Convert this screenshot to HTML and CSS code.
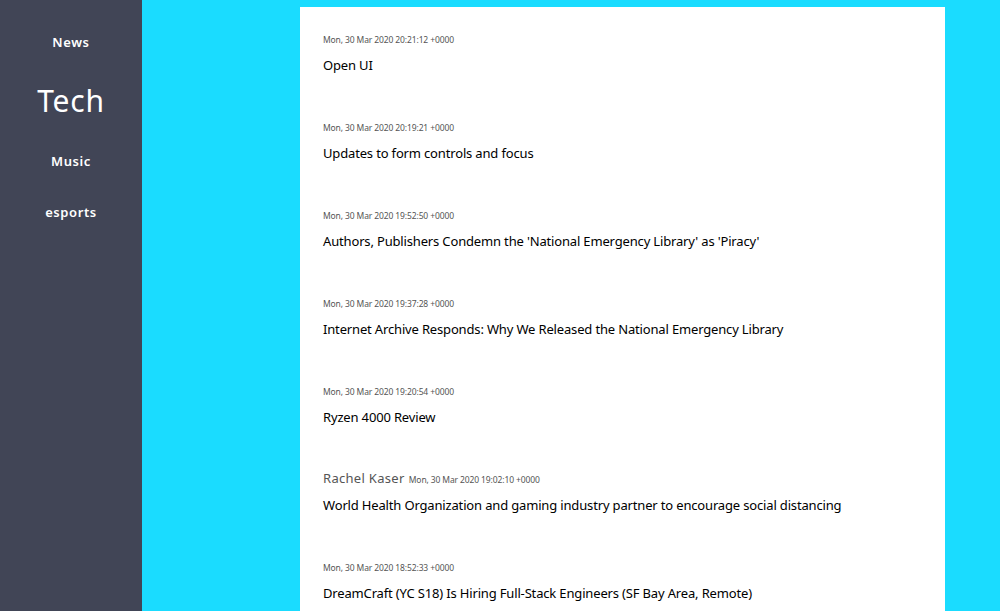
FILE: index.html
```html
<!DOCTYPE html>
<html>
<head>
<meta charset="utf-8">
<link rel="stylesheet" href="styles.css">
</head>
<body>
<div class="layout">
  <nav class="sidebar">
    <a class="nav-item nav-news">News</a>
    <a class="nav-item nav-active">Tech</a>
    <a class="nav-item nav-music">Music</a>
    <a class="nav-item nav-esports">esports</a>
  </nav>
  <main class="main">
    <section class="panel">
      <article class="item">
        <div class="meta"><span class="date">Mon, 30 Mar 2020 20:21:12 +0000</span></div>
        <div class="title">Open UI</div>
      </article>
      <article class="item">
        <div class="meta"><span class="date">Mon, 30 Mar 2020 20:19:21 +0000</span></div>
        <div class="title">Updates to form controls and focus</div>
      </article>
      <article class="item">
        <div class="meta"><span class="date">Mon, 30 Mar 2020 19:52:50 +0000</span></div>
        <div class="title">Authors, Publishers Condemn the 'National Emergency Library' as 'Piracy'</div>
      </article>
      <article class="item">
        <div class="meta"><span class="date">Mon, 30 Mar 2020 19:37:28 +0000</span></div>
        <div class="title">Internet Archive Responds: Why We Released the National Emergency Library</div>
      </article>
      <article class="item">
        <div class="meta"><span class="date">Mon, 30 Mar 2020 19:20:54 +0000</span></div>
        <div class="title">Ryzen 4000 Review</div>
      </article>
      <article class="item">
        <div class="meta"><span class="author">Rachel Kaser</span> <span class="date">Mon, 30 Mar 2020 19:02:10 +0000</span></div>
        <div class="title">World Health Organization and gaming industry partner to encourage social distancing</div>
      </article>
      <article class="item">
        <div class="meta"><span class="date">Mon, 30 Mar 2020 18:52:33 +0000</span></div>
        <div class="title">DreamCraft (YC S18) Is Hiring Full-Stack Engineers (SF Bay Area, Remote)</div>
      </article>
    </section>
  </main>
</div>
</body>
</html>
```
FILE: styles.css
```css
html, body {
  margin: 0;
  padding: 0;
  height: 100%;
  overflow: hidden;
}
body {
  font-family: "Noto Sans", "Open Sans", sans-serif;
  background: #1adcff;
}
.layout {
  display: flex;
  height: 611px;
}
.sidebar {
  width: 142px;
  flex: none;
  background: #414556;
  display: flex;
  flex-direction: column;
  align-items: center;
  color: #ffffff;
}
.nav-item {
  display: block;
  font-size: 13px;
  font-weight: 600;
  letter-spacing: 0.6px;
  line-height: 18px;
}
.nav-news { margin-top: 33px; }
.nav-active {
  font-size: 30px;
  font-weight: 400;
  letter-spacing: 0.8px;
  line-height: 36px;
  margin-top: 32px;
}
.nav-music { margin-top: 33px; }
.nav-esports { margin-top: 33px; }
.main {
  flex: 1;
  padding: 7px 55px 0 158px;
}
.panel {
  background: #ffffff;
  padding: 23px 23px 0 23px;
  height: 100%;
  box-sizing: border-box;
  overflow: hidden;
}
.item {
  height: 88px;
}
.meta {
  height: 14px;
  line-height: 14px;
  color: #555555;
}
.date {
  font-size: 8.5px;
  letter-spacing: -0.12px;
}
.author {
  font-size: 13px;
  letter-spacing: 0.3px;
}
.title {
  margin-top: 12px;
  font-size: 13px;
  line-height: 18px;
  color: #000000;
  font-weight: 400;
  letter-spacing: -0.16px;
}
```
